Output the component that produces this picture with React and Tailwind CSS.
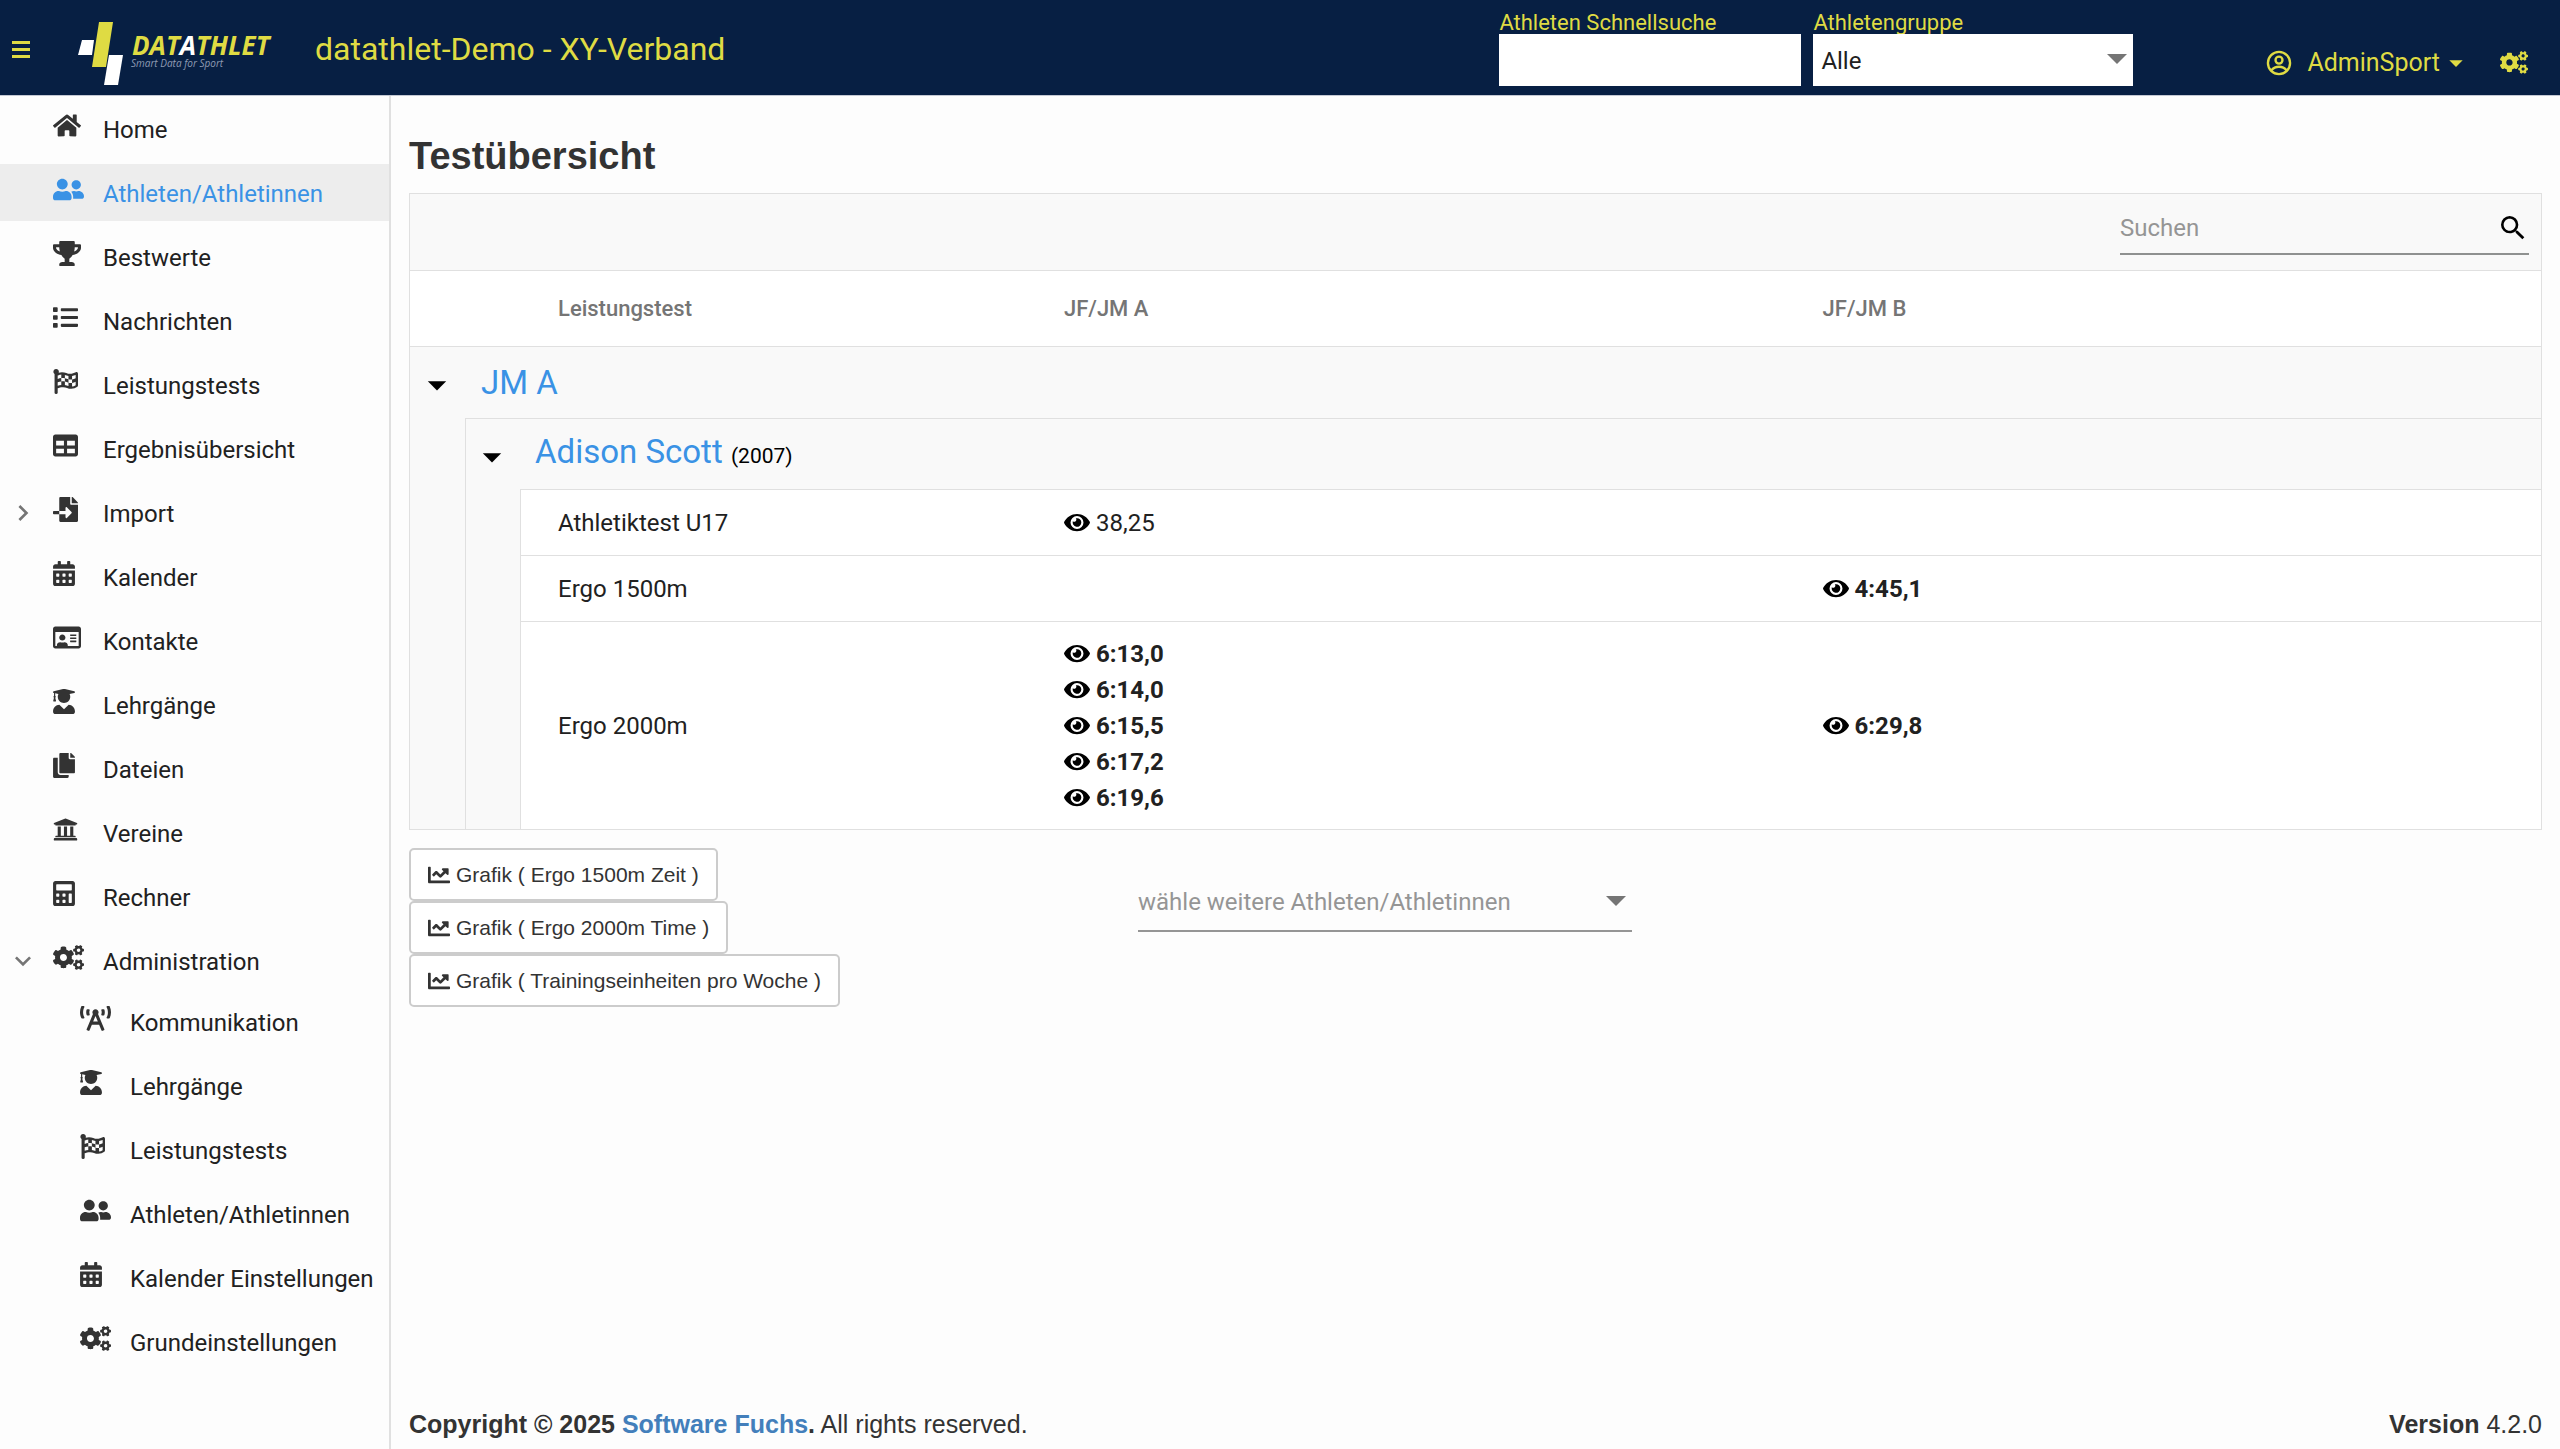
import {
  FaHome, FaUserFriends, FaTrophy, FaList, FaFlagCheckered, FaTable, FaFileImport,
  FaCalendarAlt, FaRegIdCard, FaUserGraduate, FaCopy, FaUniversity, FaCalculator,
  FaCogs, FaBroadcastTower, FaEye, FaChartLine,
} from "react-icons/fa";
import { MdChevronRight, MdExpandMore, MdArrowDropDown, MdSearch } from "react-icons/md";

const NAV = [
  { label: "Home", icon: FaHome, width: "w-[28px]" },
  { label: "Athleten/Athletinnen", icon: FaUserFriends, width: "w-[31px]", active: true },
  { label: "Bestwerte", icon: FaTrophy, width: "w-[28px]" },
  { label: "Nachrichten", icon: FaList, width: "w-[25px]" },
  { label: "Leistungstests", icon: FaFlagCheckered, width: "w-[25px]" },
  { label: "Ergebnisübersicht", icon: FaTable, width: "w-[25px]" },
  { label: "Import", icon: FaFileImport, width: "w-[25px]", toggle: MdChevronRight },
  { label: "Kalender", icon: FaCalendarAlt, width: "w-[22px]" },
  { label: "Kontakte", icon: FaRegIdCard, width: "w-[28px]" },
  { label: "Lehrgänge", icon: FaUserGraduate, width: "w-[22px]" },
  { label: "Dateien", icon: FaCopy, width: "w-[22px]" },
  { label: "Vereine", icon: FaUniversity, width: "w-[25px]" },
  { label: "Rechner", icon: FaCalculator, width: "w-[22px]" },
  { label: "Administration", icon: FaCogs, width: "w-[31px]", toggle: MdExpandMore },
];

const ADMIN_NAV = [
  { label: "Kommunikation", icon: FaBroadcastTower, width: "w-[31px]" },
  { label: "Lehrgänge", icon: FaUserGraduate, width: "w-[22px]" },
  { label: "Leistungstests", icon: FaFlagCheckered, width: "w-[25px]" },
  { label: "Athleten/Athletinnen", icon: FaUserFriends, width: "w-[31px]" },
  { label: "Kalender Einstellungen", icon: FaCalendarAlt, width: "w-[22px]" },
  { label: "Grundeinstellungen", icon: FaCogs, width: "w-[31px]" },
];

const CHARTS = ["Ergo 1500m Zeit", "Ergo 2000m Time", "Trainingseinheiten pro Woche"];

function Logo() {
  return (
    <svg viewBox="0 0 196 66" className="mt-3 h-[66px] w-[196px] shrink-0" role="img" aria-label="Datathlet – Smart Data for Sport">
      <path d="M5 19h12l-2 15H1z" fill="#fff" />
      <path d="M22 1h14l-7 45H15z" fill="#dfdb43" />
      <path d="M32 34h14l-5 30H27z" fill="#fff" />
      <text x="55" y="34" fontFamily="Open Sans, sans-serif" fontSize="26" fontWeight="700" fontStyle="italic" fill="#dfdb43">
        DAT<tspan fill="#fff">A</tspan>THLET
      </text>
      <text x="54" y="46" fontFamily="Open Sans, sans-serif" fontSize="10" fontStyle="italic" fill="#8f9bb3">
        Smart Data for Sport
      </text>
    </svg>
  );
}

function MenuIcon() {
  return (
    <svg viewBox="0 0 18 17" className="h-[17px] w-[18px]" fill="currentColor" aria-hidden="true">
      <path d="M0 0h18v3H0zM0 7h18v3H0zM0 14h18v3H0z" />
    </svg>
  );
}

function AccountIcon() {
  return (
    <svg viewBox="0 0 24 24" className="size-7" fill="none" stroke="currentColor" strokeWidth="2" aria-hidden="true">
      <circle cx="12" cy="12" r="9.5" />
      <circle cx="12" cy="9.5" r="3" />
      <path d="M5.500 18.200c1.600-2 4-3 6.500-3s4.900 1 6.500 3" />
    </svg>
  );
}

function NavItem({ item, nested }) {
  const Icon = item.icon;
  const Toggle = item.toggle;
  return (
    <li>
      <a
        href="#"
        aria-current={item.active ? "page" : undefined}
        className={`flex h-[57px] items-center ${nested ? "pl-[27px]" : ""} ${item.active ? "bg-[#ededed] text-[#3a92e5]" : "text-[#212121]"}`}
      >
        <span className="flex w-[53px] shrink-0 justify-center pr-2 text-[#757575]">
          {Toggle && <Toggle className="size-8" aria-hidden="true" />}
        </span>
        <span className={`w-[50px] shrink-0 ${item.active ? "" : "text-[#333]"}`}>
          <Icon className={`mb-1.5 h-[25px] ${item.width}`} aria-hidden="true" />
        </span>
        <span className="whitespace-nowrap pt-0.5">{item.label}</span>
      </a>
    </li>
  );
}

function Header() {
  return (
    <header className="flex h-[96px] shrink-0 items-center border-b border-[#c3c8d3] bg-[#071f43] text-[#dfdb43]">
      <button type="button" aria-label="Menü" className="ml-[5px] mr-10 flex size-8 items-center justify-center pt-1">
        <MenuIcon />
      </button>
      <Logo />
      <span className="ml-[42px] pt-0.5 text-[32px]">datathlet-Demo - XY-Verband</span>
      <div className="ml-auto flex gap-3 self-start pt-3 text-[22px] leading-[22px]">
        <div className="flex w-[302px] flex-col">
          <label htmlFor="quick">Athleten Schnellsuche</label>
          <input id="quick" type="text" className="h-[52px] w-full bg-white px-2 text-black" />
        </div>
        <div className="flex w-[320px] flex-col">
          <label htmlFor="group">Athletengruppe</label>
          <div className="relative">
            <select id="group" className="h-[52px] w-full appearance-none bg-white px-2 pt-0.5 text-[24px] text-[#212121]">
              <option>Alle</option>
            </select>
            <MdArrowDropDown className="pointer-events-none absolute -right-2 top-0 size-12 text-[#757575]" aria-hidden="true" />
          </div>
        </div>
      </div>
      <button type="button" className="ml-[132px] flex items-center pt-[30px] text-[25px] leading-8">
        <AccountIcon />
        <span className="ml-3.5">AdminSport</span>
        <MdArrowDropDown className="size-8" aria-hidden="true" />
      </button>
      <button type="button" aria-label="Einstellungen" className="ml-7 mr-8 pt-[30px]">
        <FaCogs className="h-[23px] w-[28px]" aria-hidden="true" />
      </button>
    </header>
  );
}

function Value({ children, bold }) {
  return (
    <a href="#" className={`flex h-9 items-center gap-1.5 ${bold ? "font-bold" : ""}`}>
      <FaEye className="h-[23px] w-[26px] text-black" aria-hidden="true" />
      {children}
    </a>
  );
}

function Caret() {
  return (
    <button type="button" aria-label="Gruppe zuklappen" aria-expanded="true" className="flex h-[71px] w-full items-center justify-center pr-0.5 pt-1 text-black">
      <MdArrowDropDown className="size-11" aria-hidden="true" />
    </button>
  );
}

function TestTable() {
  return (
    <div className="border border-[#e0e0e0] bg-white">
      <div className="flex h-[76px] justify-end bg-[#f9f9f9] pr-3">
        <div className="flex h-[61px] w-[409px] items-center border-b-2 border-[#8f9190] pt-2">
          <input type="search" aria-label="Suchen" placeholder="Suchen" className="min-w-0 flex-1 bg-transparent outline-none placeholder:text-[#959595]" />
          <MdSearch className="size-8 text-black" aria-hidden="true" />
        </div>
      </div>
      <table className="w-full table-fixed border-separate border-spacing-0 text-left">
        <colgroup>
          <col className="w-[55px]" />
          <col className="w-[55px]" />
          <col className="w-[24.4%]" />
          <col className="w-[35.6%]" />
          <col />
        </colgroup>
        <thead>
          <tr className="h-[77px] text-[22px] text-[#757575] [&>*]:border-y [&>*]:border-[#e0e0e0] [&>*]:font-medium">
            <td />
            <td />
            <th scope="col" className="pl-[38px]">Leistungstest</th>
            <th scope="col" className="pl-6">JF/JM A</th>
            <th scope="col" className="pl-6">JF/JM B</th>
          </tr>
        </thead>
        <tbody>
          <tr className="h-[71px] bg-[#f9f9f9]">
            <td rowSpan={5} className="align-top"><Caret /></td>
            <td colSpan={4} className="pl-4 text-[33px] leading-10">
              <a href="#" className="text-[#3a92e5]">JM A</a>
            </td>
          </tr>
          <tr className="h-[71px] bg-[#f9f9f9]">
            <td rowSpan={4} className="border-l border-t border-[#e0e0e0] align-top"><Caret /></td>
            <td colSpan={3} className="border-t border-[#e0e0e0] pl-[15px] text-[33px] leading-10">
              <a href="#" className="text-[#3a92e5]">Adison Scott</a>{" "}
              <span className="text-[21px] text-black">(2007)</span>
            </td>
          </tr>
          <tr className="h-[66px] [&>td]:border-t [&>td]:border-[#e0e0e0]">
            <td className="border-l pl-[37px]">Athletiktest U17</td>
            <td className="pl-6"><Value>38,25</Value></td>
            <td />
          </tr>
          <tr className="h-[66px] [&>td]:border-t [&>td]:border-[#e0e0e0]">
            <td className="border-l pl-[37px]">Ergo 1500m</td>
            <td />
            <td className="pl-6"><Value bold>4:45,1</Value></td>
          </tr>
          <tr className="h-[208px] [&>td]:border-t [&>td]:border-[#e0e0e0]">
            <td className="border-l pl-[37px]">Ergo 2000m</td>
            <td className="pl-6">
              {["6:13,0", "6:14,0", "6:15,5", "6:17,2", "6:19,6"].map((time) => (
                <Value key={time} bold>{time}</Value>
              ))}
            </td>
            <td className="pl-6"><Value bold>6:29,8</Value></td>
          </tr>
        </tbody>
      </table>
    </div>
  );
}

export default function App() {
  return (
    <div className="flex min-h-screen flex-col bg-[#fdfdfd] font-['Roboto',sans-serif] text-[24px] text-[#212121]">
      <Header />
      <div className="flex flex-1">
        <nav aria-label="Hauptmenü" className="w-[391px] shrink-0 border-r-2 border-[#e0e0e0] pt-1">
          <ul className="flex flex-col gap-[7px]">
            {NAV.map((item) => <NavItem key={item.label} item={item} />)}
          </ul>
          <ul className="flex flex-col gap-[7px] pt-1">
            {ADMIN_NAV.map((item) => <NavItem key={item.label} item={item} nested />)}
          </ul>
        </nav>
        <div className="flex min-w-0 flex-1 flex-col px-[18px]">
          <main className="flex-1 pt-[34px]">
            <h1 className="mb-2.5 font-['Liberation_Sans',sans-serif] text-[38px] font-bold leading-[53px] text-[#333]">Testübersicht</h1>
            <TestTable />
            <div className="grid grid-cols-3 pt-[18px]">
              <div className="flex flex-col items-start font-['Liberation_Sans',sans-serif] text-[21px] text-[#333]">
                {CHARTS.map((name) => (
                  <button key={name} type="button" className="flex h-[53px] items-center gap-1.5 rounded-[5px] border-2 border-[#ccc] bg-white px-[17px]">
                    <FaChartLine className="size-[22px]" aria-hidden="true" />
                    Grafik ( {name} )
                  </button>
                ))}
              </div>
              <div className="relative ml-[18px] mt-6 h-[60px] w-[494px]">
                <select aria-label="wähle weitere Athleten/Athletinnen" className="h-full w-full appearance-none border-b-2 border-[#959595] bg-transparent pt-0.5 text-[#959595]">
                  <option>wähle weitere Athleten/Athletinnen</option>
                </select>
                <MdArrowDropDown className="pointer-events-none absolute -right-2 top-1 size-12 text-[#757575]" aria-hidden="true" />
              </div>
            </div>
          </main>
          <footer className="flex justify-between pb-[9px] font-['Liberation_Sans',sans-serif] text-[25px] leading-8 text-[#333]">
            <p><b>Copyright © 2025 <a href="#" className="text-[#437fbb]">Software Fuchs</a>.</b> All rights reserved.</p>
            <p><b>Version</b> 4.2.0</p>
          </footer>
        </div>
      </div>
    </div>
  );
}
